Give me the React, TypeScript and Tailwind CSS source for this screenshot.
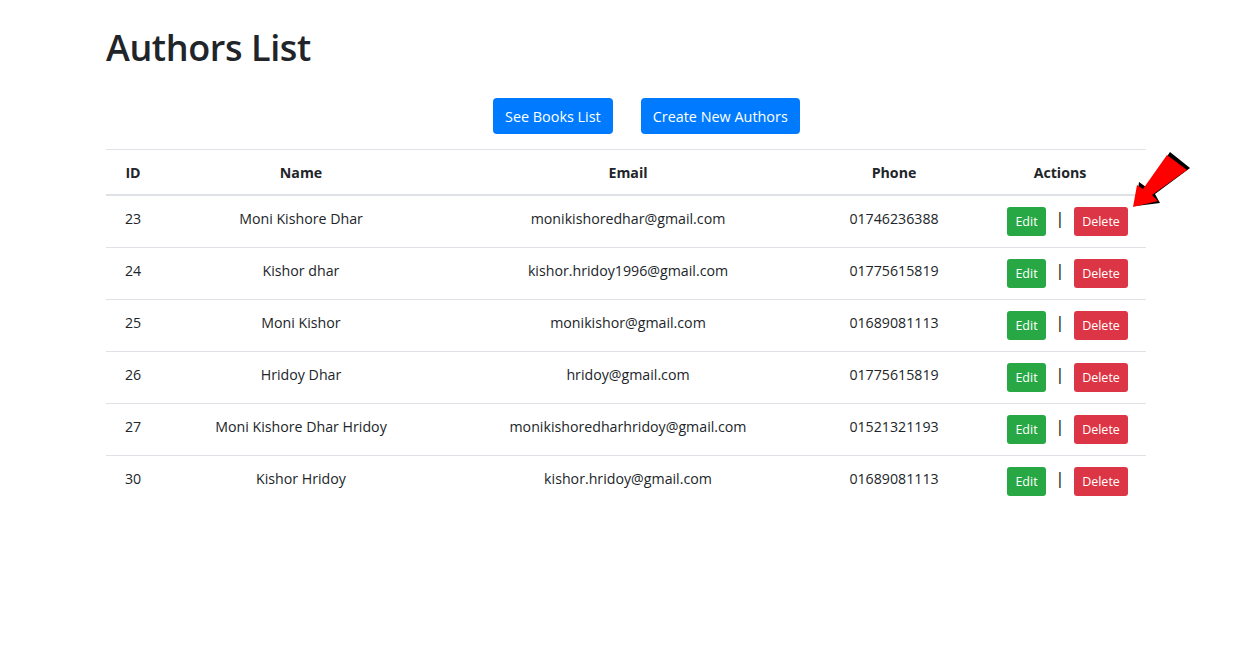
import React from "react";

type Author = {
  id: number;
  name: string;
  email: string;
  phone: string;
};

const authors: Author[] = [
  { id: 23, name: "Moni Kishore Dhar", email: "monikishoredhar@gmail.com", phone: "01746236388" },
  { id: 24, name: "Kishor dhar", email: "kishor.hridoy1996@gmail.com", phone: "01775615819" },
  { id: 25, name: "Moni Kishor", email: "monikishor@gmail.com", phone: "01689081113" },
  { id: 26, name: "Hridoy Dhar", email: "hridoy@gmail.com", phone: "01775615819" },
  { id: 27, name: "Moni Kishore Dhar Hridoy", email: "monikishoredharhridoy@gmail.com", phone: "01521321193" },
  { id: 30, name: "Kishor Hridoy", email: "kishor.hridoy@gmail.com", phone: "01689081113" },
];

const gridCols = "grid grid-cols-[54px_282px_372px_160px_172px]";

const blueButton =
  "h-[36px] rounded-[4px] bg-[#007bff] px-3 pt-[2px] text-[14.4px] leading-6 text-white";

const smallButton =
  "mt-[1px] h-[29px] rounded-[3px] text-[12.5px] leading-[30px] text-white text-center";

function Arrow() {
  const red = "1167,155 1187,170 1152,195 1158,201 1133,207 1137,185 1143,189";
  const shadow = "1170,152 1190,168 1155,194 1160,203 1136,206 1139,182 1146,187";
  return (
    <svg
      className="pointer-events-none absolute left-0 top-0"
      width={1237}
      height={648}
      viewBox="0 0 1237 648"
    >
      <polygon points={shadow} fill="#000" />
      <polygon points={red} fill="#ff0000" />
    </svg>
  );
}

export default function App() {
  return (
    <div className="relative min-h-screen bg-white font-['Open_Sans','Noto_Sans',sans-serif] text-[#212529]">
      <div className="ml-[106px] w-[1040px] pt-[24px]">
        <h1 className="text-[36px] font-semibold leading-[48px] tracking-[-0.4px]">
          Authors List
        </h1>

        {/* top buttons */}
        <div className="mt-[26px] flex gap-[28px] pl-[387px]">
          <button type="button" className={blueButton}>
            See Books List
          </button>
          <button type="button" className={blueButton}>
            Create New Authors
          </button>
        </div>

        {/* authors table */}
        <div className="mt-[15px] text-[14.2px]">
          <div
            className={`${gridCols} h-[47px] border-t border-b-2 border-[#dee2e6] items-center pt-[2px] text-center font-bold leading-6`}
          >
            <div>ID</div>
            <div>Name</div>
            <div>Email</div>
            <div>Phone</div>
            <div>Actions</div>
          </div>

          {authors.map((a, i) => (
            <div
              key={a.id}
              className={`${gridCols} text-center leading-6 ${
                i === 0 ? "h-[51px]" : "h-[52px] border-t border-[#dee2e6]"
              }`}
            >
              <div className="pt-[11px]">{a.id}</div>
              <div className="pt-[11px]">{a.name}</div>
              <div className="pt-[11px]">{a.email}</div>
              <div className="pt-[11px]">{a.phone}</div>
              <div className="flex items-start pl-[33px] pt-[10px]">
                <button type="button" className={`${smallButton} w-[39px] bg-[#28a745]`}>
                  Edit
                </button>
                <span className="w-[28px] text-center text-[16px] text-black">|</span>
                <button type="button" className={`${smallButton} w-[54px] bg-[#dc3545]`}>
                  Delete
                </button>
              </div>
            </div>
          ))}
        </div>
      </div>

      <Arrow />
    </div>
  );
}
